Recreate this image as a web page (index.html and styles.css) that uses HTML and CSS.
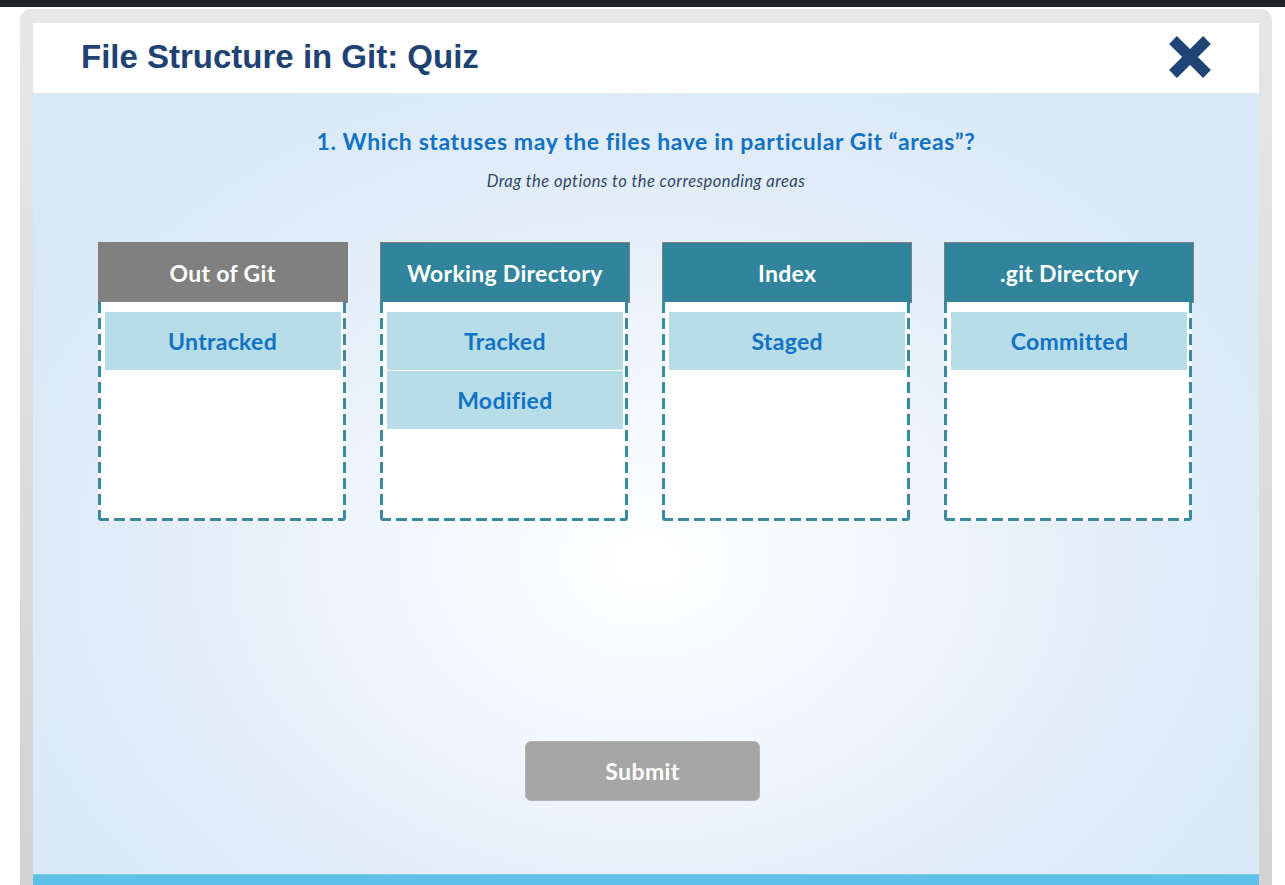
FILE: index.html
```html
<!DOCTYPE html>
<html lang="en">
<head>
<meta charset="utf-8">
<title>File Structure in Git: Quiz</title>
<link rel="stylesheet" href="styles.css">
</head>
<body>
<div class="topbar"></div>
<div class="frame">
  <div class="window">
    <header class="header">
      <h1 class="title">File Structure in Git: Quiz</h1>
      <button class="close" aria-label="Close">
        <svg width="44" height="44" viewBox="0 0 44 44"><path d="M5 5 L39 39 M39 5 L5 39" stroke="#1f4577" stroke-width="11" stroke-linecap="butt" fill="none"/></svg>
      </button>
    </header>
    <main class="content">
      <h2 class="question">1. Which statuses may the files have in particular Git “areas”?</h2>
      <p class="hint">Drag the options to the corresponding areas</p>
      <div class="columns">
        <div class="column">
          <div class="col-head grey">Out of Git</div>
          <div class="drop">
            <div class="item">Untracked</div>
          </div>
        </div>
        <div class="column">
          <div class="col-head">Working Directory</div>
          <div class="drop">
            <div class="item">Tracked</div>
            <div class="item">Modified</div>
          </div>
        </div>
        <div class="column">
          <div class="col-head">Index</div>
          <div class="drop">
            <div class="item">Staged</div>
          </div>
        </div>
        <div class="column">
          <div class="col-head">.git Directory</div>
          <div class="drop">
            <div class="item">Committed</div>
          </div>
        </div>
      </div>
      <div class="actions">
        <button class="submit">Submit</button>
      </div>
    </main>
    <div class="footer-bar"></div>
  </div>
</div>
</body>
</html>
```
FILE: styles.css
```css
* { box-sizing: border-box; }
html, body { margin: 0; padding: 0; }
body {
  width: 1285px;
  height: 885px;
  overflow: hidden;
  background: #ffffff;
  font-family: "Lato", "Open Sans", sans-serif;
}
.topbar {
  height: 7px;
  background: #202124;
}
.frame {
  margin: 2px 13px 0 20px;
  padding: 14px 13px 0 13px;
  height: 900px;
  border-radius: 11px 11px 0 0;
  background: linear-gradient(to bottom, #e7e7e7 0%, #d2d2d2 100%);
}
.window {
  display: flex;
  flex-direction: column;
  height: 862px;
}
.header {
  height: 70px;
  background: #ffffff;
  display: flex;
  align-items: center;
  justify-content: space-between;
  padding: 0 47px 3px 48px;
}
.title {
  margin: 0;
  font-family: "Liberation Sans", Arial, sans-serif;
  font-weight: bold;
  font-size: 33px;
  color: #1f4272;
}
.close {
  border: 0;
  padding: 0;
  background: none;
  width: 44px;
  height: 44px;
  display: block;
}
.close svg { display: block; }
.content {
  height: 781px;
  background: radial-gradient(ellipse 60% 72% at 50% 60%, #ffffff 0%, #f4f8fd 30%, #e2edf8 65%, #d9e8f6 100%);
  display: flex;
  flex-direction: column;
  align-items: center;
  padding-top: 33px;
}
.question {
  margin: 0;
  font-size: 23px;
  font-weight: bold;
  color: #1172c4;
  line-height: 30px;
  letter-spacing: 0.6px;
}
.hint {
  margin: 15px 0 0 0;
  font-size: 16.5px;
  font-style: italic;
  color: #31486b;
  line-height: 20px;
  letter-spacing: 0.45px;
}
.columns {
  margin-top: 51px;
  display: grid;
  grid-template-columns: repeat(4, 250px);
  column-gap: 32.3px;
}
.col-head {
  height: 61px;
  background: #31849b;
  border: 1px solid #7f7f7f;
  color: #ffffff;
  font-weight: bold;
  font-size: 23px;
  letter-spacing: 0.3px;
  display: flex;
  align-items: center;
  justify-content: center;
}
.col-head.grey { background: #808080; }
.drop {
  width: 248px;
  height: 219px;
  margin-top: -1px;
  border-radius: 0 0 3px 3px;
  background:
    repeating-linear-gradient(to bottom, #3a8aa0 0 11px, transparent 11px 16px) left top / 3px 100% no-repeat,
    repeating-linear-gradient(to bottom, #3a8aa0 0 11px, transparent 11px 16px) right top / 3px 100% no-repeat,
    repeating-linear-gradient(to right, #3a8aa0 0 11px, transparent 11px 16px) left bottom / 100% 3px no-repeat,
    #ffffff;
  padding: 10px 5px 0 7px;
  display: flex;
  flex-direction: column;
  gap: 1px;
}
.item {
  height: 58px;
  background: #b7dde8;
  color: #1272c4;
  font-weight: bold;
  font-size: 23px;
  letter-spacing: 0.3px;
  display: flex;
  align-items: center;
  justify-content: center;
}
.actions {
  margin-top: 220px;
}
.submit {
  width: 235px;
  height: 60px;
  margin-right: 7px;
  background: #a6a6a6;
  border: 1px solid #b4b4b4;
  border-radius: 6px;
  color: #ffffff;
  font-family: "Lato", "Open Sans", sans-serif;
  font-weight: bold;
  font-size: 23px;
  letter-spacing: 0.4px;
}
.footer-bar {
  height: 11px;
  background: #5fc0e8;
  border-top: 1px solid #7ecdee;
}
```
